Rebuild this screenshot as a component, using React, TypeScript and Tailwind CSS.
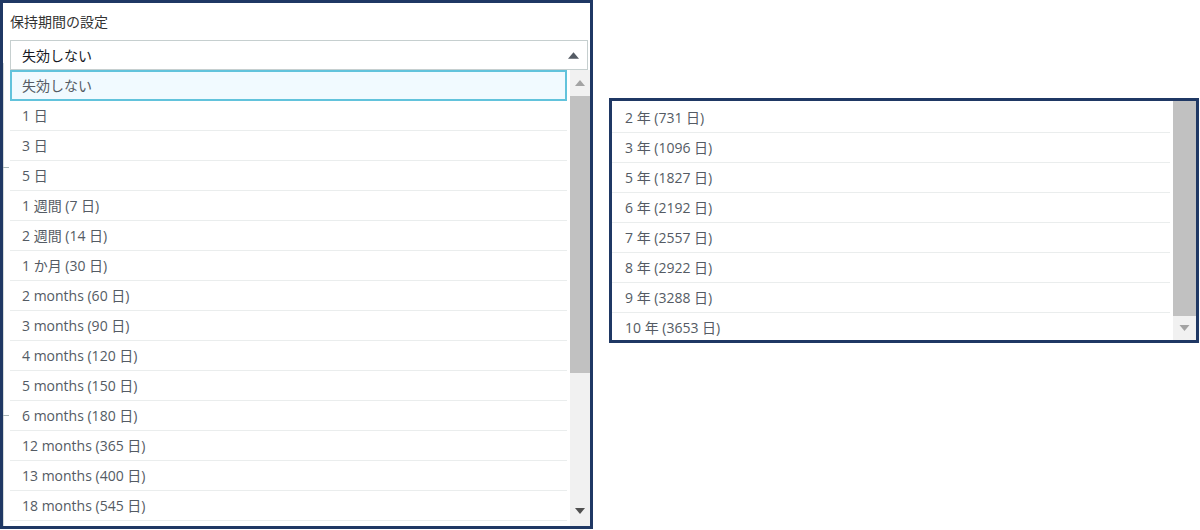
import React from "react";

const leftItems = [
  "1 日",
  "3 日",
  "5 日",
  "1 週間 (7 日)",
  "2 週間 (14 日)",
  "1 か月 (30 日)",
  "2 months (60 日)",
  "3 months (90 日)",
  "4 months (120 日)",
  "5 months (150 日)",
  "6 months (180 日)",
  "12 months (365 日)",
  "13 months (400 日)",
  "18 months (545 日)",
];

const rightItems = [
  "2 年 (731 日)",
  "3 年 (1096 日)",
  "5 年 (1827 日)",
  "6 年 (2192 日)",
  "7 年 (2557 日)",
  "8 年 (2922 日)",
  "9 年 (3288 日)",
  "10 年 (3653 日)",
];

const font = { fontFamily: '"Open Sans", "Noto Sans CJK JP", sans-serif' };

function Up({ color = "#a3a3a3", w = 10, h = 6 }: { color?: string; w?: number; h?: number }) {
  return (
    <svg width={w} height={h} viewBox="0 0 10 6">
      <polygon points="5,0 10,6 0,6" fill={color} />
    </svg>
  );
}
function Down({ color = "#a3a3a3", w = 10, h = 6 }: { color?: string; w?: number; h?: number }) {
  return (
    <svg width={w} height={h} viewBox="0 0 10 6">
      <polygon points="0,0 10,0 5,6" fill={color} />
    </svg>
  );
}

export default function App() {
  return (
    <div
      className="w-[1200px] h-[530px] bg-white flex items-start overflow-hidden text-[14px]"
      style={font}
    >
      {/* Left panel */}
      <div className="relative w-[593px] h-[529px] border-[3px] border-[#1f3864] flex flex-col overflow-hidden shrink-0">
        <div className="absolute left-0 top-[60px] bottom-0 w-px bg-[#d5dbdb]" />
        <div className="absolute left-0 top-[164px] w-[6px] h-px bg-[#aab7b8]" />
        <div className="absolute left-0 top-[412px] w-[6px] h-px bg-[#aab7b8]" />
        <div className="pl-[7px] flex flex-col h-full">
          <div className="h-[37px] pt-[10px] leading-[18px] text-[#333]">保持期間の設定</div>
          <div className="w-[578px] h-[30px] border border-[#c6cfcf] flex items-center justify-between pl-[11px] pr-[8px] text-[#16191f]">
            <span>失効しない</span>
            <Up color="#545b64" w={11} h={7} />
          </div>
          <div className="flex flex-1 min-h-0">
            <div className="w-[557px] flex flex-col overflow-hidden text-[#545b64]">
              <div className="h-[31px] shrink-0 border-2 border-[#62c3dc] bg-[#f1faff] pl-[10px] flex items-center">
                失効しない
              </div>
              {leftItems.map((t) => (
                <div
                  key={t}
                  className="h-[30px] shrink-0 border-b border-[#eaeded] pl-[12px] flex items-center"
                >
                  {t}
                </div>
              ))}
            </div>
            <div className="ml-[3px] w-[20px] bg-[#f1f1f1] flex flex-col">
              <div className="h-[26px] flex items-center justify-center">
                <Up w={10} h={6} />
              </div>
              <div className="h-[277px] bg-[#c1c1c1]" />
              <div className="flex-1" />
              <div className="h-[18px] flex items-start justify-center">
                <Down color="#505050" w={10} h={6} />
              </div>
            </div>
          </div>
        </div>
      </div>

      {/* Right panel */}
      <div className="mt-[98px] ml-[16px] w-[590px] h-[245px] border-[3px] border-[#1f3864] flex overflow-hidden shrink-0">
        <div className="w-[558px] pt-[2px] flex flex-col overflow-hidden text-[#545b64]">
          {rightItems.map((t) => (
            <div
              key={t}
              className="h-[30px] shrink-0 border-b border-[#eaeded] pl-[13px] flex items-center"
            >
              {t}
            </div>
          ))}
        </div>
        <div className="ml-[3px] w-[23px] bg-[#f1f1f1] flex flex-col">
          <div className="h-[215px] bg-[#c1c1c1]" />
          <div className="flex-1 flex items-center justify-center">
            <Down w={11} h={6} />
          </div>
        </div>
      </div>
    </div>
  );
}
